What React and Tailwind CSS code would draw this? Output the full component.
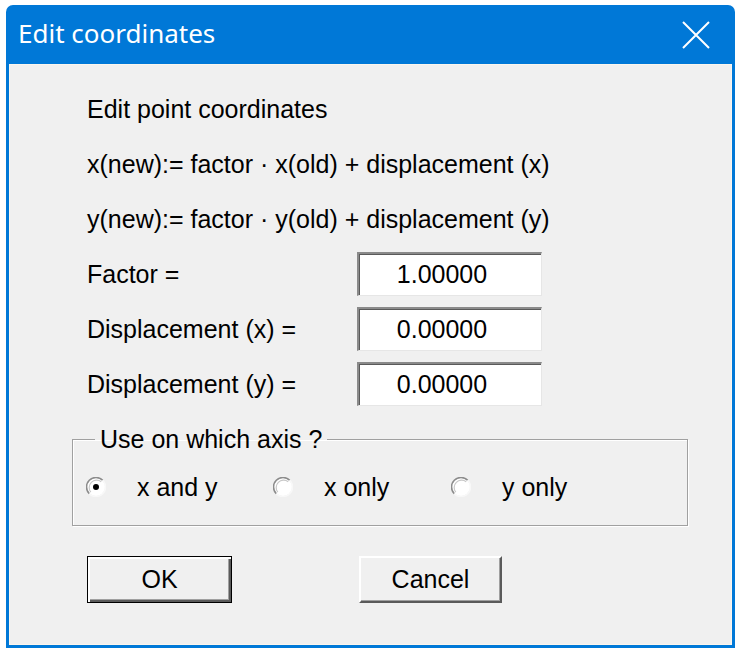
import { useState } from 'react';

// Windows-style "Edit coordinates" dialog

function CloseGlyph() {
  return (
    <svg width="28" height="28" viewBox="0 0 28 28">
      <path d="M1 1 L27 27 M27 1 L1 27" stroke="#fff" strokeWidth="2" fill="none" />
    </svg>
  );
}

function RadioDot({ checked }) {
  return (
    <svg width="20" height="20" viewBox="0 0 20 20" className="shrink-0">
      <circle cx="10" cy="10" r="9" fill="#fff" />
      {/* sunken edge: dark top-left, light bottom-right */}
      <path d="M3.3 16.7 A9.2 9.2 0 0 1 16.7 3.3" stroke="#8c8c8c" strokeWidth="1.6" fill="none" />
      <path d="M4.8 15.2 A7.4 7.4 0 0 1 15.2 4.8" stroke="#c8c8c8" strokeWidth="1.2" fill="none" />
      <path d="M16.7 3.3 A9.2 9.2 0 0 1 3.3 16.7" stroke="#f8f8f8" strokeWidth="1.6" fill="none" />
      {checked && <circle cx="10" cy="10" r="3" fill="#000" />}
    </svg>
  );
}

function ValueBox({ value }) {
  return (
    <div className="w-[185px] h-[44px] bg-white border-t-2 border-l-2 border-t-[#8a8a8a] border-l-[#8a8a8a] border-b border-r border-b-[#e6e6e6] border-r-[#e6e6e6] shadow-[inset_1px_1px_0_#5a5a5a] flex items-center justify-center pr-[16px]">
      {value}
    </div>
  );
}

function ValueRow({ label, value }) {
  return (
    <div className="flex items-center h-[44px]">
      <span className="w-[270px]">{label}</span>
      <ValueBox value={value} />
    </div>
  );
}

export default function App() {
  const [axis, setAxis] = useState('xy');

  const radios = [
    { id: 'xy', text: 'x and y', w: 'w-[187px]' },
    { id: 'x', text: 'x only', w: 'w-[178px]' },
    { id: 'y', text: 'y only', w: '' },
  ];

  return (
    <div className="w-[742px] h-[651px] bg-white pt-[5px] pl-[6px]">
      <div className="w-[729px] h-[643px] bg-[#0078d7] rounded-t-[7px] flex flex-col px-[3px] pb-[3px]">
        {/* Title bar */}
        <div className="h-[59px] flex items-center justify-between pl-[9px] pr-[22px] shrink-0">
          <span className="text-white text-[26px] font-['Noto_Sans',sans-serif] leading-none pb-[3px]">
            Edit coordinates
          </span>
          <CloseGlyph />
        </div>

        {/* Client area */}
        <div className="flex-1 bg-[#f0f0f0] border border-[#fbf6ee] text-black text-[25px] leading-none font-['Liberation_Sans',Arial,sans-serif] pl-[77px] pt-[17px] flex flex-col">
          <div className="h-[55px] flex items-center">Edit point coordinates</div>
          <div className="h-[55px] flex items-center">x(new):= factor · x(old) + displacement (x)</div>
          <div className="h-[55px] flex items-center">y(new):= factor · y(old) + displacement (y)</div>

          <div className="mt-[5px] flex flex-col gap-[11px]">
            <ValueRow label="Factor =" value="1.00000" />
            <ValueRow label="Displacement (x) =" value="0.00000" />
            <ValueRow label="Displacement (y) =" value="0.00000" />
          </div>

          {/* Group box */}
          <fieldset className="-ml-[15px] w-[616px] mt-[19px] border border-[#a0a0a0] shadow-[1px_1px_0_#fff,inset_1px_1px_0_#fff] pl-[13px] pb-[18px]">
            <legend className="ml-[9px] px-[5px] h-[29px] leading-[29px]">Use on which axis ?</legend>
            <div className="mt-[13px] h-[40px] flex items-center">
              {radios.map((r) => (
                <label
                  key={r.id}
                  className={`${r.w} flex items-center gap-[31px] cursor-default`}
                  onClick={() => setAxis(r.id)}
                >
                  <RadioDot checked={axis === r.id} />
                  <span>{r.text}</span>
                </label>
              ))}
            </div>
          </fieldset>

          {/* Buttons */}
          <div className="mt-[30px] flex items-start">
            <button className="w-[145px] h-[47px] border border-black shadow-[inset_2px_2px_0_#fff,inset_-2px_-2px_0_#5a5a5a,inset_-3px_-3px_0_#a0a0a0] bg-[#f0f0f0] flex items-center justify-center">
              OK
            </button>
            <button className="ml-[127px] w-[143px] h-[47px] border-t-2 border-l-2 border-t-white border-l-white border-b-2 border-r-2 border-b-[#5a5a5a] border-r-[#5a5a5a] shadow-[inset_-1px_-1px_0_#a0a0a0] bg-[#f0f0f0] flex items-center justify-center">
              Cancel
            </button>
          </div>
        </div>
      </div>
    </div>
  );
}
